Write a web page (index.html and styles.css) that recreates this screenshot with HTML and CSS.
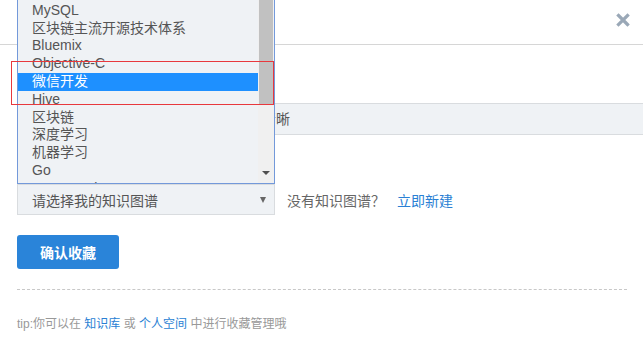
FILE: index.html
```html
<!DOCTYPE html>
<html lang="zh-CN">
<head>
    <meta charset="UTF-8">
    <title>收藏到知识图谱</title>
    <link rel="stylesheet" href="styles.css">
</head>
<body>
    <div class="modal">
        <div class="modal-head">
            <span class="close">
                <svg width="14" height="14" viewBox="0 0 14 14">
                    <path d="M2.5 2.5 L11.5 11.5 M11.5 2.5 L2.5 11.5" stroke="#9aa8b7" stroke-width="3.2" stroke-linecap="square"/>
                </svg>
            </span>
        </div>

        <div class="modal-body">
            <div class="field-bar">添加到知识图谱，让知识体系更清晰</div>

            <div class="select-row">
                <div class="select">
                    <span>请选择我的知识图谱</span>
                    <span class="caret"></span>
                </div>
                <span class="hint">没有知识图谱？</span>
                <a class="link" href="#">立即新建</a>
            </div>

            <button class="btn-primary">确认收藏</button>

            <div class="divider"></div>

            <p class="tip">tip:你可以在 <a class="link" href="#">知识库</a> 或 <a class="link" href="#">个人空间</a> 中进行收藏管理哦</p>
        </div>

        <!-- open list of the select, drawn over the form -->
        <div class="dropdown">
            <ul class="options">
                <li>Java</li>
                <li>MySQL</li>
                <li>区块链主流开源技术体系</li>
                <li>Bluemix</li>
                <li>Objective-C</li>
                <li class="active">微信开发</li>
                <li>Hive</li>
                <li>区块链</li>
                <li>深度学习</li>
                <li>机器学习</li>
                <li>Go</li>
                <li>React Native</li>
            </ul>
            <div class="scrollbar">
                <div class="thumb"></div>
                <span class="arrow-down"></span>
            </div>
        </div>

        <div class="mark"></div>
    </div>
</body>
</html>
```

FILE: styles.css
```css
html, body {
    margin: 0;
    padding: 0;
    background: #fff;
    overflow: hidden;
}

body {
    font-family: "Liberation Sans", "Noto Sans CJK SC", sans-serif;
    font-size: 14px;
    color: #555;
}

.modal {
    position: relative;
    width: 643px;
    height: 343px;
}

.modal-head {
    height: 44px;
    border-bottom: 1px solid #d6d6d6;
    display: flex;
    justify-content: flex-end;
    align-items: flex-start;
}

.close {
    display: block;
    width: 14px;
    height: 14px;
    margin: 13px 13px 0 0;
}

.close svg {
    display: block;
}

.modal-body {
    padding: 58px 16px 0 17px;
}

.field-bar {
    height: 30px;
    line-height: 30px;
    margin-right: -16px;
    padding-left: 49px;
    background: #eff2f5;
    border-top: 1px solid #d9dcdf;
    border-bottom: 1px solid #d9dcdf;
    color: #555;
    white-space: nowrap;
    overflow: hidden;
}

.select-row {
    display: flex;
    align-items: center;
    margin-top: 49px;
}

.select {
    box-sizing: border-box;
    width: 258px;
    height: 31px;
    padding: 0 8px 0 14px;
    background: #eff2f5;
    border: 1px solid #d9dcdf;
    display: flex;
    align-items: center;
    justify-content: space-between;
    color: #555;
}

.caret {
    width: 0;
    height: 0;
    border-left: 3.5px solid transparent;
    border-right: 3.5px solid transparent;
    border-top: 6px solid #666;
    margin-top: 1px;
}

.hint {
    margin-left: 12px;
    color: #666;
}

.link {
    color: #2a7fd4;
    text-decoration: none;
}

.select-row .link {
    margin-left: 12px;
}

.btn-primary {
    display: block;
    margin-top: 20px;
    width: 102px;
    height: 34px;
    border: none;
    border-radius: 3px;
    background: #2a84d9;
    color: #fff;
    font-family: "Liberation Sans", "Noto Sans CJK SC", sans-serif;
    font-size: 14px;
    font-weight: bold;
    padding: 0;
}

.divider {
    margin-top: 20px;
    border-top: 1px dashed #c8c8c8;
}

.tip {
    margin: 24px 0 0;
    font-size: 12px;
    line-height: 20px;
    color: #999;
}

/* open select list */
.dropdown {
    position: absolute;
    left: 17px;
    top: -20px;
    width: 256px;
    height: 202px;
    border: 1px solid #7399da;
    background: #eff2f5;
    overflow: hidden;
    display: flex;
}

.options {
    list-style: none;
    margin: 0;
    padding: 3px 0 0;
    width: 240px;
}

.options li {
    height: 17.8px;
    line-height: 17.8px;
    padding-left: 14px;
    color: #555;
    white-space: nowrap;
}

.options li.active {
    background: #1e90ff;
    color: #fff;
}

.scrollbar {
    position: relative;
    width: 16px;
    background: #f0f0f0;
}

.thumb {
    margin: 0 1px;
    height: 123px;
    background: #c1c1c1;
}

.arrow-down {
    position: absolute;
    left: 4px;
    bottom: 8px;
    width: 0;
    height: 0;
    border-left: 4px solid transparent;
    border-right: 4px solid transparent;
    border-top: 4px solid #505050;
}

/* annotation frame */
.mark {
    position: absolute;
    left: 11px;
    top: 61px;
    width: 261px;
    height: 42px;
    border: 1px solid #e8383d;
}
```
